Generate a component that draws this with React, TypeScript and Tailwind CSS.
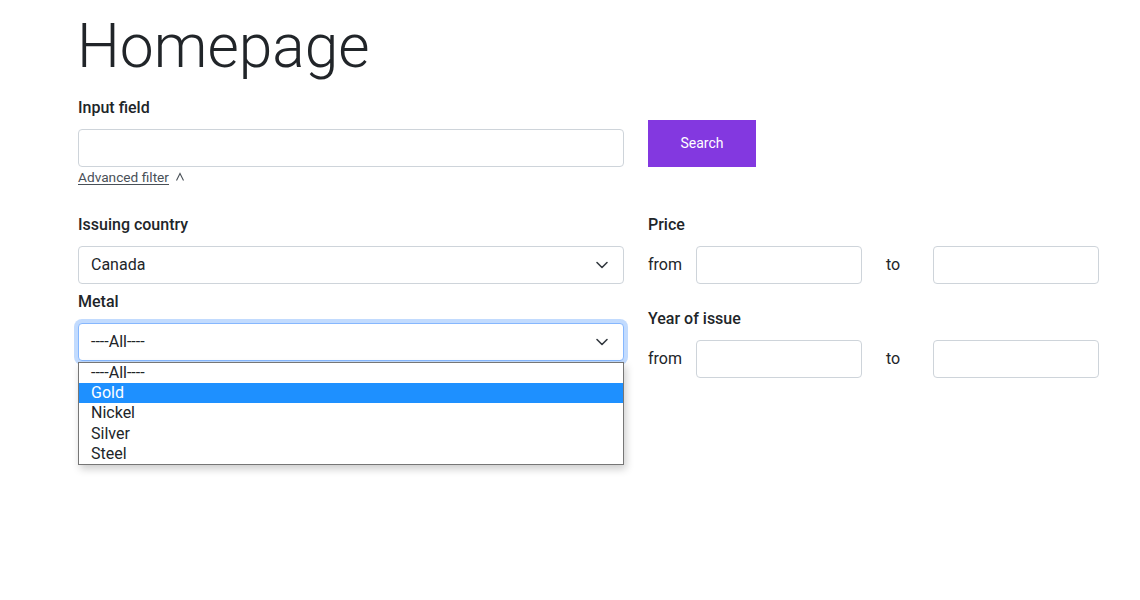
import React from "react"

const font = { fontFamily: "Roboto, 'Liberation Sans', sans-serif" }

function Chevron() {
  return (
    <svg width="14" height="14" viewBox="0 0 14 14" className="shrink-0">
      <path d="M2 4.5l5 5 5-5" fill="none" stroke="#343a40" strokeWidth="1.6" strokeLinecap="round" strokeLinejoin="round" />
    </svg>
  )
}

function Label({ children }: { children: React.ReactNode }) {
  return <div className="text-[16px] font-medium leading-[22px] text-[#212529] mb-[10px]">{children}</div>
}

function RangeRow({ label }: { label: string }) {
  return (
    <div>
      <Label>{label}</Label>
      <div className="flex items-center text-[16px] text-[#212529]">
        <span className="w-[48px]">from</span>
        <div className="w-[166px] h-[38px] border border-[#ced4da] rounded-[4px] bg-white" />
        <span className="w-[47px] ml-[24px]">to</span>
        <div className="w-[166px] h-[38px] border border-[#ced4da] rounded-[4px] bg-white" />
      </div>
    </div>
  )
}

export default function App() {
  const metals = ["----All----", "Gold", "Nickel", "Silver", "Steel"]
  return (
    <div className="min-h-[600px] bg-white pl-[78px] pt-[11px] text-[#212529]" style={font}>
      <h1 className="text-[60.5px] font-light leading-[72px] text-[#212529] -ml-[1px]">Homepage</h1>

      <div className="flex gap-6 mt-[14px]">
        <div className="w-[546px]">
          <Label>Input field</Label>
          <div className="h-[38px] border border-[#ced4da] rounded-[4px] bg-white" />
          <div className="flex items-center text-[13.7px] leading-[20px] text-[#495057]">
            <span className="underline underline-offset-2">Advanced filter</span>
            <svg width="10" height="10" viewBox="0 0 10 10" className="ml-[6px]">
              <path d="M1.5 8.5L5 1.5l3.5 7" fill="none" stroke="#495057" strokeWidth="1.1" />
            </svg>
          </div>
        </div>
        <button className="mt-[23px] w-[108px] h-[47px] bg-[#8338e0] text-white text-[14px] font-normal">Search</button>
      </div>

      <div className="flex gap-6 mt-[27px]">
        <div className="w-[546px]">
          <Label>Issuing country</Label>
          <div className="h-[38px] border border-[#ced4da] rounded-[4px] bg-white flex items-center justify-between pl-[12px] pr-[14px] text-[16px]">
            <span>Canada</span>
            <Chevron />
          </div>

          <div className="mt-[7px]">
            <Label>Metal</Label>
            <div className="relative">
              <div className="h-[38px] border border-[#86b7fe] rounded-[4px] bg-white flex items-center justify-between pl-[12px] pr-[14px] text-[16px] shadow-[0_0_0_4px_rgba(13,110,253,0.25)]">
                <span>----All----</span>
                <Chevron />
              </div>
              <div className="absolute left-0 right-0 top-[39px] bg-white border border-[#767676] shadow-[2px_4px_8px_rgba(0,0,0,0.2)] text-[16px] leading-[20.2px] z-10">
                {metals.map((m, i) => (
                  <div
                    key={m}
                    className={i === 1 ? "px-[12px] bg-[#1e90ff] text-white" : "px-[12px] text-[#212529]"}
                  >
                    {m}
                  </div>
                ))}
              </div>
            </div>
          </div>
        </div>

        <div className="flex flex-col gap-[24px]">
          <RangeRow label="Price" />
          <RangeRow label="Year of issue" />
        </div>
      </div>
    </div>
  )
}
